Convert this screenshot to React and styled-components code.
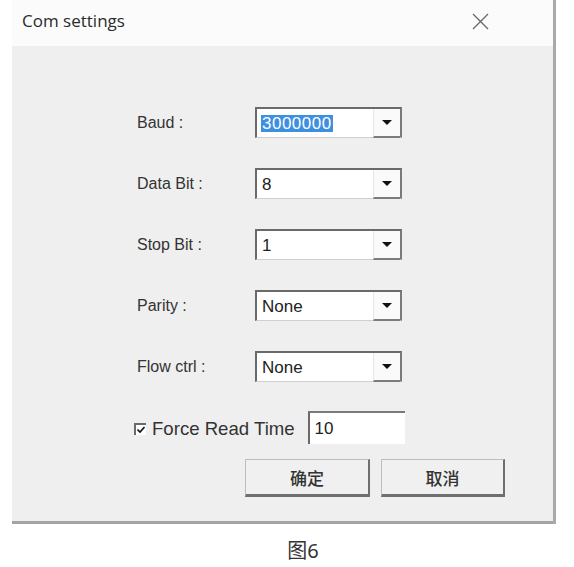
import React from 'react';
import styled, { createGlobalStyle } from 'styled-components';

const GlobalStyle = createGlobalStyle`
  html, body {
    margin: 0;
    padding: 0;
    background: #ffffff;
  }
  body {
    font-family: "Liberation Sans", "Noto Sans CJK SC", sans-serif;
  }
`;

const Page = styled.div`
  width: 574px;
  min-height: 567px;
  display: flex;
  flex-direction: column;
  align-items: flex-start;
`;

const Dialog = styled.div`
  margin-left: 12px;
  width: 541px;
  border-right: 3px solid #a9a9a9;
  display: flex;
  flex-direction: column;
`;

const TitleBar = styled.div`
  height: 46px;
  background: #fbfbfb;
  display: flex;
  align-items: center;
  justify-content: space-between;
  padding: 0 64px 0 10px;
`;

const Title = styled.span`
  font-family: "Open Sans", "Noto Sans", sans-serif;
  font-size: 17px;
  color: #2b2b2b;
  margin-top: -6px;
`;

const Close = styled.span`
  display: flex;
  margin-top: -4px;
`;

const Body = styled.div`
  background: #efefef;
  height: 478px;
  border-bottom: 3px solid #a4a4a4;
  box-sizing: border-box;
  padding: 61px 0 0 122px;
  display: flex;
  flex-direction: column;
`;

const Form = styled.div`
  display: grid;
  grid-template-columns: 118px 147px;
  row-gap: 30px;
  align-items: center;
  padding-left: 3px;
`;

const Label = styled.span`
  font-size: 16px;
  color: #333;
`;

const Combo = styled.div`
  height: 31px;
  box-sizing: border-box;
  background: #ffffff;
  border-top: 2px solid #6a6a6a;
  border-left: 2px solid #6a6a6a;
  border-right: 2px solid #7a7a7a;
  border-bottom: 1px solid #cfcfcf;
  display: flex;
  align-items: stretch;
`;

const Value = styled.div`
  flex: 1;
  display: flex;
  align-items: center;
  padding-left: 4px;
  font-size: 17px;
  color: #222;
`;

const Selected = styled.span`
  background: ${(p) => (p.$highlight ? '#3d8fe0' : 'transparent')};
  color: ${(p) => (p.$highlight ? '#ffffff' : '#222')};
  letter-spacing: ${(p) => (p.$highlight ? '0.5px' : '0')};
  padding: 0 1px;
  line-height: 17px;
`;

const Arrow = styled.div`
  width: 26px;
  background: #fafafa;
  border-bottom: 2px solid #7c7c7c;
  border-left: 1px solid #e6e6e6;
  display: flex;
  align-items: center;
  justify-content: center;
  margin-bottom: -1px;
`;

const Triangle = styled.span`
  width: 0;
  height: 0;
  border-left: 5px solid transparent;
  border-right: 5px solid transparent;
  border-top: 5px solid #111;
`;

const ForceRow = styled.div`
  display: flex;
  align-items: center;
  margin-top: 29px;
`;

const Check = styled.span`
  width: 12px;
  height: 12px;
  box-sizing: border-box;
  border-top: 2px solid #6a6a6a;
  border-left: 2px solid #6a6a6a;
  background: #fff;
  display: flex;
  align-items: center;
  justify-content: center;
  margin: 3px 6px 0 0;
`;

const ForceLabel = styled.span`
  font-size: 18.6px;
  color: #333;
  margin: 3px 13px 0 0;
`;

const TextBox = styled.div`
  width: 97px;
  height: 33px;
  box-sizing: border-box;
  background: #ffffff;
  border-top: 2px solid #7a7a7a;
  border-left: 2px solid #6a6a6a;
  display: flex;
  align-items: center;
  padding-left: 5px;
  font-size: 17px;
  color: #222;
`;

const Buttons = styled.div`
  display: flex;
  gap: 11px;
  margin-top: 15px;
  margin-left: 111px;
`;

const Button = styled.div`
  width: ${(p) => p.$w}px;
  height: 38px;
  box-sizing: border-box;
  background: #f0f0f0;
  border-top: 1px solid #bdbdbd;
  border-left: 1px solid #bdbdbd;
  border-right: 2px solid #6f6f6f;
  border-bottom: 3px solid #6f6f6f;
  display: flex;
  align-items: center;
  justify-content: center;
  font-family: "Noto Sans CJK SC", sans-serif;
  font-size: 17px;
  font-weight: 500;
  color: #333;
`;

const Caption = styled.div`
  align-self: stretch;
  text-align: center;
  margin-top: 15px;
  padding-left: 32px;
  font-family: "Noto Sans", "Noto Sans CJK SC", sans-serif;
  font-size: 20px;
  line-height: 24px;
  color: #333;
`;

const fields = [
  { label: 'Baud :', value: '3000000', highlight: true },
  { label: 'Data Bit :', value: '8' },
  { label: 'Stop Bit :', value: '1' },
  { label: 'Parity :', value: 'None' },
  { label: 'Flow ctrl :', value: 'None' },
];

const App = () => (
  <>
    <GlobalStyle />
    <Page>
      <Dialog>
        <TitleBar>
          <Title>Com settings</Title>
          <Close>
            <svg width="17" height="17" viewBox="0 0 17 17">
              <path d="M1 1L16 16M16 1L1 16" stroke="#666" strokeWidth="1.3" fill="none" />
            </svg>
          </Close>
        </TitleBar>
        <Body>
          <Form>
            {fields.map((f) => (
              <React.Fragment key={f.label}>
                <Label>{f.label}</Label>
                <Combo>
                  <Value>
                    <Selected $highlight={f.highlight}>{f.value}</Selected>
                  </Value>
                  <Arrow>
                    <Triangle />
                  </Arrow>
                </Combo>
              </React.Fragment>
            ))}
          </Form>
          <ForceRow>
            <Check>
              <svg width="8" height="8" viewBox="0 0 8 8">
                <path d="M0.5 3.5L3 6L7.5 1" stroke="#111" strokeWidth="1.6" fill="none" />
              </svg>
            </Check>
            <ForceLabel>Force Read Time</ForceLabel>
            <TextBox>10</TextBox>
          </ForceRow>
          <Buttons>
            <Button $w={125}>确定</Button>
            <Button $w={124}>取消</Button>
          </Buttons>
        </Body>
      </Dialog>
      <Caption>图6</Caption>
    </Page>
  </>
);

export default App;
